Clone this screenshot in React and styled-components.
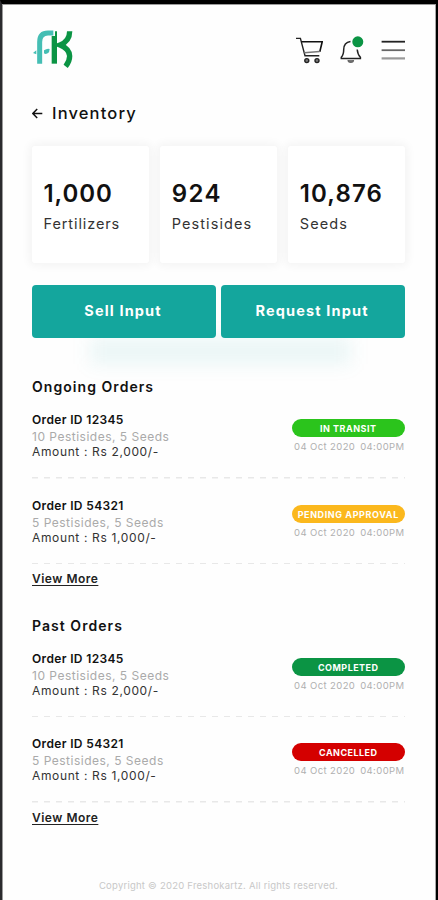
import React from "react";
import styled, { createGlobalStyle } from "styled-components";

const GlobalStyle = createGlobalStyle`
  *, *::before, *::after { box-sizing: border-box; }
  body { margin: 0; background: #fff; }
`;

const Screen = styled.div`
  width: 438px;
  height: 900px;
  overflow: hidden;
  display: flex;
  flex-direction: column;
  padding: 0 31px 0 30px;
  background: #fefefe;
  border-style: solid;
  border-width: 4px 2px 0;
  border-color: #000 #000 #000 #2b2b2e;
  box-shadow: inset 1px 1px 0 #9b9b9b, inset -1px 0 0 #a8a8a8;
  font-family: Inter, "Open Sans", sans-serif;
  color: #111;
  white-space: nowrap;
  & > * { flex-shrink: 0; }
`;

const Header = styled.header`
  height: 92px;
  display: flex;
  align-items: center;
  justify-content: space-between;
`;

const Actions = styled.nav`
  display: flex;
  align-items: center;
  gap: 16px;
  svg { display: block; }
`;

const TitleRow = styled.div`
  height: 34px;
  display: flex;
  align-items: center;
  gap: 8px;
`;

const Title = styled.h1`
  margin: 0;
  font-size: 16.5px;
  font-weight: 550;
  line-height: 24px;
  letter-spacing: 1.15px;
`;

const Stats = styled.section`
  margin-top: 16px;
  display: grid;
  grid-template-columns: repeat(3, 1fr);
  gap: 11.5px;
`;

const StatCard = styled.div`
  height: 117px;
  padding: 33px 0 0 11.5px;
  border-radius: 3px;
  background: #fff;
  box-shadow: 0 0 8px 3px rgba(0, 0, 0, 0.045);
`;

const StatValue = styled.div`
  font-size: 24px;
  font-weight: 600;
  line-height: 30px;
  letter-spacing: ${(p) => p.$spacing}px;
`;

const StatLabel = styled.div`
  font-size: 14.5px;
  line-height: 20px;
  margin-top: 5px;
  letter-spacing: ${(p) => p.$spacing}px;
  color: #333;
`;

const ButtonRow = styled.div`
  position: relative;
  z-index: 1;
  margin-top: 22px;
  display: grid;
  grid-template-columns: 1fr 1fr;
  gap: 5px;
`;

const ButtonGlow = styled.div`
  height: 26px;
  margin: 0 54px 0 58px;
  background: rgba(20, 166, 157, 0.085);
  filter: blur(9px);
`;

const Button = styled.button`
  height: 53px;
  padding: 0 2px 2px 0;
  border: 0;
  border-radius: 4px;
  background: #14a69d;
  color: #fff;
  font-family: inherit;
  font-size: 14.5px;
  font-weight: 700;
  letter-spacing: 1.15px;
`;

const Section = styled.section`
  display: flex;
  flex-direction: column;
  height: 238.5px;
`;

const Orders = styled.main`
  margin-top: 11px;
`;

const Heading = styled.h2`
  margin: 0 0 13px;
  font-size: 14px;
  font-weight: 600;
  line-height: 24px;
  letter-spacing: 1.05px;
`;

const OrderRow = styled.article`
  height: 66.5px;
  flex: none;
  display: flex;
  justify-content: space-between;
  background: repeating-linear-gradient(90deg, #e8e8e8 0 6px, transparent 6px 12px) 0 100% / 100% 1.5px no-repeat;
  & + & { margin-top: 19px; }
`;

const OrderInfo = styled.div`
  font-size: 12px;
`;

const OrderId = styled.div`
  font-weight: 600;
  line-height: 16px;
  letter-spacing: 0.35px;
`;

const Items = styled.div`
  line-height: 17px;
  letter-spacing: 0.5px;
  color: #aaa;
`;

const Amount = styled.div`
  line-height: 14px;
  letter-spacing: 0.64px;
  color: #333;
`;

const OrderStatus = styled.div`
  width: 112.5px;
  margin-right: 0.5px;
  padding-top: 7px;
`;

const Pill = styled.div`
  height: 18px;
  border-radius: 9px;
  background: ${(p) => p.$color};
  color: #fff;
  font-size: 9px;
  font-weight: 700;
  line-height: 19.5px;
  letter-spacing: ${(p) => p.$spacing}px;
  text-align: center;
`;

const Timestamp = styled.div`
  display: flex;
  justify-content: space-between;
  padding: 3px 0 0 2px;
  font-size: 9.5px;
  line-height: 13px;
  color: #b0b0b0;
  letter-spacing: 0.4px;
`;

const ViewMore = styled.a`
  align-self: flex-start;
  margin-top: 7px;
  font-size: 12px;
  font-weight: 600;
  line-height: 16px;
  letter-spacing: 0.5px;
  color: #222;
  text-decoration: underline;
  text-underline-offset: 2px;
  text-decoration-thickness: 1px;
`;

const Footer = styled.footer`
  margin-top: 26px;
  text-align: center;
  font-size: 9.5px;
  line-height: 16px;
  letter-spacing: 0.23px;
  color: #c8c8c8;
`;

const Logo = () => (
  <svg width="42" height="40" viewBox="96 90 126 120" fill="none">
    <path d="M119 191V126Q119 99 144 99H160" stroke="#45beb4" strokeWidth="15" />
    <path d="M132 151Q142 144 149 147L147 157Q138 165 132 160Z" fill="#45beb4" />
    <path d="M99 159L109 151V163Z" fill="#45beb4" />
    <path d="M163 108V191" stroke="#0b9444" strokeWidth="16" />
    <path d="M168 94V109" stroke="#0b9444" strokeWidth="6" />
    <path d="M209 94Q209 124 180 135Q208 146 209 168Q209 184 197 199" stroke="#0b9444" strokeWidth="16" />
  </svg>
);

const CartIcon = () => (
  <svg width="28" height="28" viewBox="295 36 28 28" fill="none" stroke="#222" strokeWidth="1.4">
    <path d="M296 38.4h4.4L305 55.8h14.3" />
    <path d="M301.3 41.8h20.9l-2.4 10" stroke="#111" strokeWidth="1.6" />
    <path d="M304.2 52.7l15.4-1.2" stroke="#777" />
    <circle cx="306.8" cy="60.6" r="2" fill="#777" />
    <circle cx="317" cy="60.6" r="2" fill="#777" />
  </svg>
);

const BellIcon = () => (
  <svg width="26" height="28" viewBox="338 36 26 28" fill="none" stroke="#222" strokeWidth="1.5">
    <path d="M349.5 41.4C345 42 342.7 45.5 342.7 49.5C342.7 54 342 55.5 340.3 57.2V58.5H359.4V57.2C357.6 55.5 356.6 53.5 356.2 49.5" />
    <path d="M347.2 60a2.6 2.3 0 0 0 5.2 0" fill="#777" stroke="#666" />
    <circle cx="356.8" cy="41.8" r="5.5" fill="#0b9444" stroke="none" />
  </svg>
);

const MenuIcon = () => (
  <svg width="24" height="28" viewBox="381 36 24 28" strokeWidth="1.8">
    <path d="M381.6 41.7H405" stroke="#222" />
    <path d="M381.6 50.2H405" stroke="#666" />
    <path d="M381.6 58.4H405" stroke="#999" strokeWidth="2.2" />
  </svg>
);

const BackIcon = () => (
  <svg width="12" height="12" viewBox="0 0 12 12" fill="none" stroke="#111" strokeWidth="1.5">
    <path d="M10.3 6.5H.8M5.2 2L.8 6.5l4.4 4.5" />
  </svg>
);

const stats = [
  { value: "1,000", label: "Fertilizers", vs: 0.95, ls: 0.9 },
  { value: "924", label: "Pestisides", vs: 1.4, ls: 1.1 },
  { value: "10,876", label: "Seeds", vs: 1.1, ls: 1.1 },
];

const sections = [
  {
    title: "Ongoing Orders",
    orders: [
      { id: "12345", items: "10 Pestisides, 5 Seeds", amount: "2,000", status: "IN TRANSIT", color: "#2bc41c", ls: 0.5 },
      { id: "54321", items: "5 Pestisides, 5 Seeds", amount: "1,000", status: "PENDING APPROVAL", color: "#fbb81d", ls: 0.6 },
    ],
  },
  {
    title: "Past Orders",
    orders: [
      { id: "12345", items: "10 Pestisides, 5 Seeds", amount: "2,000", status: "COMPLETED", color: "#0b9444", ls: 0.46 },
      { id: "54321", items: "5 Pestisides, 5 Seeds", amount: "1,000", status: "CANCELLED", color: "#d40000", ls: 0.46 },
    ],
  },
];

export default function App() {
  return (
    <>
      <GlobalStyle />
      <Screen>
        <Header>
          <Logo />
          <Actions>
            <CartIcon />
            <BellIcon />
            <MenuIcon />
          </Actions>
        </Header>
        <TitleRow>
          <BackIcon />
          <Title>Inventory</Title>
        </TitleRow>
        <Stats>
          {stats.map((s) => (
            <StatCard key={s.label}>
              <StatValue $spacing={s.vs}>{s.value}</StatValue>
              <StatLabel $spacing={s.ls}>{s.label}</StatLabel>
            </StatCard>
          ))}
        </Stats>
        <ButtonRow>
          <Button>Sell Input</Button>
          <Button>Request Input</Button>
        </ButtonRow>
        <ButtonGlow />
        <Orders>
          {sections.map((section) => (
            <Section key={section.title}>
              <Heading>{section.title}</Heading>
              {section.orders.map((o) => (
                <OrderRow key={o.id}>
                  <OrderInfo>
                    <OrderId>Order ID {o.id}</OrderId>
                    <Items>{o.items}</Items>
                    <Amount>Amount : Rs {o.amount}/-</Amount>
                  </OrderInfo>
                  <OrderStatus>
                    <Pill $color={o.color} $spacing={o.ls}>{o.status}</Pill>
                    <Timestamp>
                      <span>04 Oct 2020</span>
                      <span>04:00PM</span>
                    </Timestamp>
                  </OrderStatus>
                </OrderRow>
              ))}
              <ViewMore>View More</ViewMore>
            </Section>
          ))}
        </Orders>
        <Footer>Copyright © 2020 Freshokartz. All rights reserved.</Footer>
      </Screen>
    </>
  );
}
